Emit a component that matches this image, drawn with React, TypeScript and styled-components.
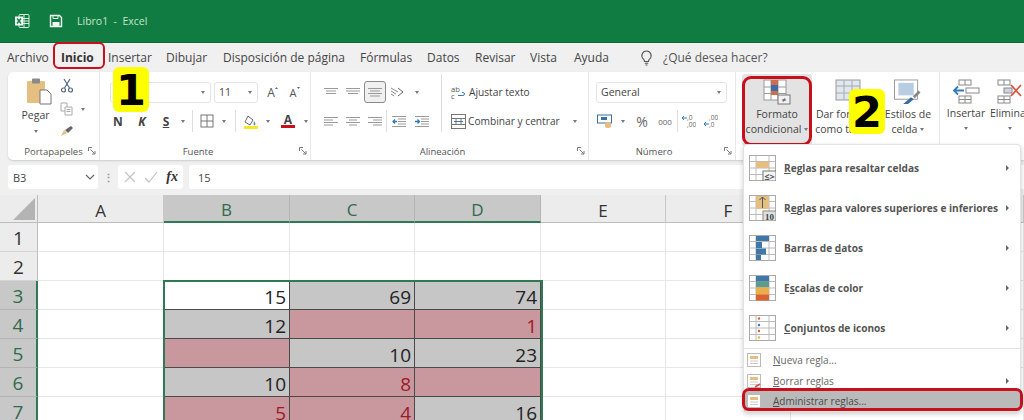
import styled, { createGlobalStyle } from "styled-components";

const GlobalStyle = createGlobalStyle`
    html, body { margin: 0; padding: 0; background: #f0f0f0; }
    body { font-family: "Open Sans", "Noto Sans", sans-serif; color: #444; overflow: hidden; }
    #root { width: 1024px; height: 420px; overflow: hidden; }
`;

const Page = styled.div`
    position: relative;
    width: 1024px;
    height: 420px;
    overflow: hidden;
    background: #f0f0f0;
`;

/* ---- title bar ---- */
const TitleBar = styled.div`
    height: 43px;
    box-sizing: border-box;
    background: #107c41;
    display: flex;
    align-items: center;
    padding: 0 0 0 14px;
    border-bottom: 1px solid #0c6a37;
`;

const TitleText = styled.span`
    margin-left: 14px;
    font-size: 10.5px;
    color: #c4e3cf;
    white-space: pre;
`;

/* ---- tabs ---- */
const TabRow = styled.div`
    height: 29px;
    display: flex;
    align-items: center;
    padding-left: 7px;
    font-size: 12px;
    color: #444;
    white-space: nowrap;
`;

const Tab = styled.span<{ $w: number }>`
    width: ${(p) => p.$w}px;
    flex: none;
`;

const ActiveTab = styled(Tab)`
    position: relative;
    font-weight: 700;
    color: #333;
    &::after {
        content: "";
        position: absolute;
        left: -8px;
        top: -7px;
        width: 48px;
        height: 23px;
        border: 2.5px solid #c8101c;
        border-radius: 6px;
    }
`;

const SearchHint = styled.span`
    margin-left: 10px;
    font-size: 12px;
    color: #555;
`;

/* ---- ribbon ---- */
const Ribbon = styled.div`
    height: 88px;
    margin-left: 8px;
    display: flex;
    background: #fff;
    border-radius: 5px 0 0 5px;
    box-shadow: 0 1px 2px rgba(0, 0, 0, 0.15);
    overflow: hidden;
`;

const Group = styled.div<{ $w: number; $last?: boolean }>`
    width: ${(p) => p.$w}px;
    flex: none;
    box-sizing: border-box;
    display: flex;
    flex-direction: column;
    padding: 2px 0;
    border-right: ${(p) => (p.$last ? "none" : "1px solid #e8e8e8")};
`;

const GroupBody = styled.div`
    height: 70px;
    flex: none;
    display: flex;
`;

const GroupFoot = styled.div<{ $shift?: number }>`
    height: 14px;
    flex: none;
    position: relative;
    display: flex;
    align-items: center;
    justify-content: center;
    box-sizing: border-box;
    padding-right: ${(p) => p.$shift ?? 0}px;
    font-size: 9.5px;
    color: #555;
    & > svg { position: absolute; right: 3px; top: 3px; }
`;

const Stack = styled.div<{ $w?: number; $pl?: number }>`
    display: flex;
    flex-direction: column;
    ${(p) => (p.$w ? `width: ${p.$w}px; flex: none;` : "")}
    padding-left: ${(p) => p.$pl ?? 0}px;
    box-sizing: border-box;
`;

const ToolRow = styled.div<{ $h?: number; $pl?: number; $pt?: number }>`
    height: ${(p) => p.$h ?? 24}px;
    display: flex;
    align-items: center;
    padding-left: ${(p) => p.$pl ?? 0}px;
    margin-top: ${(p) => p.$pt ?? 0}px;
`;

const Tool = styled.span<{ $w: number; $active?: boolean }>`
    width: ${(p) => p.$w}px;
    height: 22px;
    flex: none;
    display: flex;
    align-items: center;
    justify-content: center;
    font-size: 12px;
    color: #555;
    box-sizing: border-box;
    ${(p) => (p.$active ? "border: 1px solid #8a8a8a; border-radius: 3px; background: #f0f0f0;" : "")}
`;

const ToolText = styled.span<{ $w: number }>`
    width: ${(p) => p.$w}px;
    flex: none;
    font-size: 10.2px;
    color: #444;
    white-space: nowrap;
    margin-left: 2px;
`;

const TinyDigits = styled.span`
    font-size: 8px;
    color: #666;
`;

const PercentSign = styled.span`
    font-size: 14px;
    color: #666;
`;

const BoldLetter = styled.span<{ $italic?: boolean; $under?: boolean }>`
    font-size: 12px;
    font-weight: 700;
    color: #444;
    font-style: ${(p) => (p.$italic ? "italic" : "normal")};
    text-decoration: ${(p) => (p.$under ? "underline" : "none")};
`;

const RowSep = styled.span<{ $h?: number; $mx?: number }>`
    width: 1px;
    height: ${(p) => p.$h ?? 22}px;
    flex: none;
    background: #dedede;
    margin: 0 ${(p) => p.$mx ?? 0}px;
`;

const Caret = styled.span`
    width: 0;
    height: 0;
    display: inline-block;
    border-left: 2.5px solid transparent;
    border-right: 2.5px solid transparent;
    border-top: 3px solid #777;
`;

const ComboBox = styled.span<{ $w: number }>`
    width: ${(p) => p.$w}px;
    height: 21px;
    flex: none;
    box-sizing: border-box;
    margin-right: 3px;
    padding: 0 5px 0 4px;
    display: flex;
    align-items: center;
    justify-content: space-between;
    font-size: 10.5px;
    color: #444;
    border: 1px solid #e4e4e4;
    border-radius: 3px;
`;

const PasteButton = styled.div`
    width: 52px;
    flex: none;
    box-sizing: border-box;
    padding: 4px 0 0 3px;
    display: flex;
    flex-direction: column;
    align-items: center;
    font-size: 10.5px;
    color: #444;
    & > svg { margin: 0 0 3px 6px; }
    & > span:last-child { margin-top: 8px; }
`;

const SmallTools = styled.div`
    display: flex;
    flex-direction: column;
    align-items: flex-start;
    gap: 9px;
    padding-top: 4px;
`;

const CopyTool = styled.span`
    display: inline-flex;
    align-items: center;
    gap: 8px;
`;

const BigButton = styled.div<{ $w: number }>`
    position: relative;
    width: ${(p) => p.$w}px;
    flex: none;
    height: 70px;
    box-sizing: border-box;
    padding-top: 5px;
    display: flex;
    flex-direction: column;
    align-items: center;
    font-size: 10.5px;
    line-height: 15px;
    text-align: center;
    color: #444;
    white-space: nowrap;
    & > svg { margin-bottom: 2px; flex: none; }
    & > span:last-child:empty { margin-top: 6px; }
`;

const FormatButton = styled(BigButton)`
    background: #e3e3e3;
    border-radius: 3px;
    margin-left: 6px;
    height: 72px;
    &::after {
        content: "";
        position: absolute;
        left: 0;
        top: 2px;
        right: 0;
        bottom: 0;
        border: 3px solid #c8101c;
        border-radius: 9px;
    }
`;

const CapLabel = styled.span`
    display: inline-flex;
    align-items: center;
    gap: 3px;
`;

/* ---- formula bar ---- */
const FormulaRow = styled.div`
    height: 24px;
    margin-top: 5px;
    padding-left: 8px;
    display: flex;
    align-items: stretch;
    font-size: 11px;
    color: #444;
`;

const NameBox = styled.div`
    width: 90px;
    box-sizing: border-box;
    display: flex;
    align-items: center;
    justify-content: space-between;
    padding: 0 3px 0 5px;
    background: #fff;
    border-radius: 3px;
`;

const Dots = styled.div`
    width: 20px;
    display: flex;
    align-items: center;
    justify-content: center;
    color: #999;
    font-size: 11px;
    font-weight: 700;
`;

const FxBox = styled.div`
    width: 65px;
    box-sizing: border-box;
    display: flex;
    align-items: center;
    justify-content: space-between;
    padding: 0 5px 0 6px;
    background: #fff;
    border-radius: 3px;
`;

const FxLabel = styled.span`
    font-family: "Liberation Serif", serif;
    font-style: italic;
    font-weight: 700;
    font-size: 14px;
    color: #333;
`;

const FormulaInput = styled.div`
    flex: 1;
    margin-left: 6px;
    padding-left: 9px;
    display: flex;
    align-items: center;
    background: #fff;
    border-radius: 3px 0 0 3px;
`;

/* ---- sheet ---- */
const Sheet = styled.div`
    position: relative;
    margin-top: 6px;
    display: grid;
    grid-template-columns: 38px 126px 126px 125px 126px 125px 125px 1fr;
    grid-template-rows: 28px repeat(7, 29px);
    background: #fff;
`;

const Corner = styled.div`
    background: #ececec;
    border-bottom: 1px solid #bdbdbd;
    border-right: 1px solid #bdbdbd;
    box-sizing: border-box;
    position: relative;
    &::after {
        content: "";
        position: absolute;
        right: 2px;
        bottom: 2px;
        border-style: solid;
        border-width: 0 0 22px 22px;
        border-color: transparent transparent #b4b4b4 transparent;
    }
`;

const ColHead = styled.div<{ $sel?: boolean }>`
    box-sizing: border-box;
    display: flex;
    align-items: center;
    justify-content: center;
    padding-top: 3px;
    font-size: 17px;
    color: ${(p) => (p.$sel ? "#2f6b4c" : "#333")};
    background: ${(p) => (p.$sel ? "#c8c8c8" : "#ececec")};
    border-right: 1px solid ${(p) => (p.$sel ? "#b4b4b4" : "#c8c8c8")};
    border-bottom: ${(p) => (p.$sel ? "2px solid #2f7a54" : "1px solid #bdbdbd")};
`;

const RowHead = styled.div<{ $sel?: boolean }>`
    box-sizing: border-box;
    display: flex;
    align-items: center;
    justify-content: center;
    padding-top: 2px;
    font-size: 19px;
    color: ${(p) => (p.$sel ? "#2f6b4c" : "#333")};
    background: ${(p) => (p.$sel ? "#c8c8c8" : "#ececec")};
    border-bottom: 1px solid ${(p) => (p.$sel ? "#b4b4b4" : "#d4d4d4")};
    border-right: ${(p) => (p.$sel ? "2px solid #2f7a54" : "1px solid #bdbdbd")};
`;

const tones = {
    none: { bg: "#fff", fg: "#222", line: "#e6e6e6" },
    white: { bg: "#fff", fg: "#222", line: "#4a4a4a" },
    gray: { bg: "#c6c6c6", fg: "#222", line: "#4a4a4a" },
    pink: { bg: "#c9979e", fg: "#9c1a26", line: "#4a4a4a" },
};

const Cell = styled.div<{ $tone: keyof typeof tones }>`
    box-sizing: border-box;
    display: flex;
    align-items: center;
    justify-content: flex-end;
    padding: 3px 3px 0 0;
    font-size: 19px;
    background: ${(p) => tones[p.$tone].bg};
    color: ${(p) => tones[p.$tone].fg};
    border-right: 1px solid ${(p) => tones[p.$tone].line};
    border-bottom: 1px solid ${(p) => tones[p.$tone].line};
`;

const SelectionFrame = styled.div`
    position: absolute;
    left: 163px;
    top: 85px;
    width: 376px;
    height: 150px;
    border: 2px solid #2f7a54;
    pointer-events: none;
`;

/* ---- dropdown ---- */
const Menu = styled.div`
    position: absolute;
    left: 743px;
    top: 144px;
    width: 278px;
    height: 268px;
    box-sizing: border-box;
    padding-top: 3px;
    background: #fff;
    border: 1px solid #e2e2e2;
    border-radius: 4px;
    box-shadow: 0 2px 5px rgba(0, 0, 0, 0.2);
    z-index: 3;
`;

const BigItem = styled.div`
    height: 40px;
    display: flex;
    align-items: center;
    padding: 0 11px 0 5px;
    font-size: 10.1px;
    font-weight: 700;
    color: #555;
    white-space: nowrap;
    & > svg:first-child { margin-right: 8px; flex: none; }
`;

const SmallItem = styled.div`
    height: 21px;
    display: flex;
    align-items: center;
    padding: 0 11px 0 3px;
    font-size: 10px;
    color: #666;
    white-space: nowrap;
    & > svg:first-child { margin-right: 12px; flex: none; }
`;

const ManageItem = styled(SmallItem)`
    position: relative;
    height: 20px;
    background: #bababa;
    color: #4a4a4a;
    &::after {
        content: "";
        position: absolute;
        left: -2px;
        right: -3px;
        top: -3px;
        bottom: 0;
        border: 3px solid #c8101c;
        border-radius: 7px;
    }
`;

const MenuSep = styled.div`
    height: 1px;
    background: #e2e2e2;
`;

const Push = styled.span`
    flex: 1;
`;

const ArrowRight = styled.span`
    width: 0;
    height: 0;
    border-top: 3px solid transparent;
    border-bottom: 3px solid transparent;
    border-left: 3.5px solid #666;
`;

const Key = styled.span`
    text-decoration: underline;
`;

const Badge = styled.div<{ $x: number; $y: number }>`
    position: absolute;
    left: ${(p) => p.$x}px;
    top: ${(p) => p.$y}px;
    width: 36px;
    height: 45px;
    display: flex;
    align-items: center;
    justify-content: center;
    background: #ffff00;
    border-radius: 6px;
    font-family: "DejaVu Sans", sans-serif;
    font-weight: 700;
    font-size: 43px;
    color: #000;
    z-index: 4;
`;

/* ---- drawings ---- */
const ExcelLogo = () => (
    <svg width="16" height="16" viewBox="0 0 16 16" fill="none">
        <rect x="5" y="1.500" width="10" height="13" rx="1" stroke="#d8efe1" />
        <path d="M10 2v12M5 5.500h10M5 8h10M5 10.500h10" stroke="#d8efe1" />
        <rect x="1" y="3.500" width="8" height="9" fill="#f2faf5" />
        <path d="M3 5.500l4 5M7 5.500l-4 5" stroke="#107c41" strokeWidth="1.4" />
    </svg>
);

const SaveGlyph = styled.svg`
    margin-left: 19px;
`;

const SaveIcon = () => (
    <SaveGlyph width="14" height="14" viewBox="0 0 14 14" fill="none">
        <path d="M1.500 1.500h9l2 2v9h-11z" stroke="#eef8f1" strokeWidth="1.4" />
        <path d="M4 1.500v3h5v-3" stroke="#eef8f1" />
        <rect x="3.500" y="8" width="7" height="4.500" fill="#eef8f1" />
    </SaveGlyph>
);

const Bulb = () => (
    <svg width="13" height="16" viewBox="0 0 13 16" fill="none" stroke="#555" strokeWidth="1.1">
        <path d="M6.500 1a4.600 4.600 0 0 0-3 8.100c.7.7 1 1.400 1 2.400h4c0-1 .3-1.700 1-2.400a4.600 4.600 0 0 0-3-8.100z" />
        <path d="M4.800 13.200h3.400M5.500 15h2" />
    </svg>
);

const Launcher = () => (
    <svg width="8" height="8" viewBox="0 0 8 8" fill="none" stroke="#777">
        <path d="M.5 4V.5H4M2.500 2.500l4 4M7 4v3H4" />
    </svg>
);

const Clipboard = () => (
    <svg width="26" height="27" viewBox="0 0 26 27">
        <rect x="1" y="3" width="18" height="22" rx="1" fill="#e5bf82" />
        <rect x="6" y="0.500" width="8" height="5" rx="1" fill="#8a8a8a" />
        <path d="M14 12h7l4 4v10H14z" fill="#fff" stroke="#777" />
    </svg>
);

const Scissors = () => (
    <svg width="14" height="15" viewBox="0 0 14 15" fill="none" stroke="#55667e" strokeWidth="1.2">
        <circle cx="3.500" cy="12" r="2" />
        <circle cx="10.500" cy="12" r="2" />
        <path d="M4.500 10L10 1M9.500 10L4 1" />
    </svg>
);

const CopyIcon = () => (
    <svg width="13" height="14" viewBox="0 0 13 14" fill="#fff" stroke="#aaa">
        <path d="M1 1h6v8H1z" />
        <path d="M5 5h7v8H5z" />
        <path d="M6.500 7.500h4M6.500 9.500h4" />
    </svg>
);

const Brush = () => (
    <svg width="14" height="12" viewBox="0 0 14 12">
        <path d="M1 11l3-6 3 3z" fill="#e5bf82" />
        <path d="M5 5l6-4 2 2-5 5z" fill="#666" />
    </svg>
);

const GrowFont = ({ down }: { down?: boolean }) => (
    <svg width="14" height="14" viewBox="0 0 14 14">
        <text x="6" y="12" textAnchor="middle" fontSize={down ? 11 : 12} fontFamily="Open Sans" fill="#555">A</text>
        <path d={down ? "M10 2l1.500 2L13 2z" : "M10 4l1.500-2L13 4z"} fill="#666" />
    </svg>
);

const BorderIcon = () => (
    <svg width="14" height="14" viewBox="0 0 14 14" fill="none" stroke="#777">
        <rect x="1" y="1" width="12" height="12" />
        <path d="M7 1v12M1 7h12" />
    </svg>
);

const FillIcon = () => (
    <svg width="16" height="17" viewBox="0 0 16 17">
        <path d="M5 3l5 4-3 5-5-3z" fill="#fff" stroke="#666" />
        <path d="M11 8c1 2 2 3 1 4s-2 0-1-4z" fill="#5a7fa8" />
        <rect x="1" y="13" width="14" height="3" fill="#f6e727" />
    </svg>
);

const FontColor = () => (
    <svg width="16" height="16" viewBox="0 0 16 16">
        <text x="8" y="11" textAnchor="middle" fontSize="12" fontWeight="700" fontFamily="Open Sans" fill="#444">A</text>
        <rect x="1" y="12" width="14" height="3" fill="#c8101c" />
    </svg>
);

const Lines = ({ rows }: { rows: number[][] }) => (
    <svg width="14" height="12" viewBox="0 0 14 12" stroke="#999">
        {rows.map(([a, b], i) => (
            <path key={i} d={`M${a} ${2.5 + i * 2.5}H${b}`} />
        ))}
    </svg>
);

const WrapIcon = () => (
    <svg width="16" height="14" viewBox="0 0 16 14">
        <text x="0" y="6.500" fontSize="7.500" fontFamily="Open Sans" fill="#555">ab</text>
        <text x="0" y="13.500" fontSize="7.500" fontFamily="Open Sans" fill="#555">c</text>
        <path d="M7 10.500h5c2 0 2-3 0-3h-1" stroke="#3a78b8" fill="none" />
    </svg>
);

const MergeIcon = () => (
    <svg width="15" height="15" viewBox="0 0 15 15" fill="none" stroke="#777">
        <rect x="0.500" y="0.500" width="14" height="14" />
        <path d="M.5 4.500h14M.5 10.500h14M5 4.500v6M10 4.500v6" />
        <path d="M3 7.500h9" stroke="#3a78b8" />
    </svg>
);

const Indent = ({ flip }: { flip?: boolean }) => (
    <svg width="14" height="12" viewBox="0 0 14 12" stroke="#9a9a9a" fill="none">
        <path d="M0 1.500h14M6 4h8M6 6.500h8M6 9h8M0 11.500h14" />
        <path d={flip ? "M0 6.500h4M2.500 4.500l2 2-2 2" : "M5 6.500H1M3 4.500l-2 2 2 2"} stroke="#2f7bbd" strokeWidth="1.3" />
    </svg>
);

const Orientation = () => (
    <svg width="15" height="12" viewBox="0 0 15 12" fill="none" stroke="#888">
        <path d="M1 2l7 4M1 5l5 3M1 8l3 2" />
        <path d="M8 2l5 4-5 4" stroke="#666" />
    </svg>
);

const CurrencyIcon = () => (
    <svg width="16" height="15" viewBox="0 0 16 15">
        <rect x="0.500" y="1" width="14" height="8" fill="#fff" stroke="#3a6ea5" />
        <rect x="4" y="3" width="6" height="3" fill="#3a6ea5" />
        <rect x="8" y="8" width="6" height="6" rx="2" fill="#e5bf82" />
    </svg>
);

const DecimalIcon = ({ up }: { up?: boolean }) => (
    <svg width="14" height="14" viewBox="0 0 14 14">
        <text x="5" y="6" fontSize="6.500" fontFamily="Open Sans" fill="#666">{up ? ",0" : ",00"}</text>
        <text x="5" y="13" fontSize="6.500" fontFamily="Open Sans" fill="#666">{up ? ",00" : ",0"}</text>
        <path d={up ? "M5 4H0M2 2L0 4l2 2" : "M5 10H0M2 8l-2 2 2 2"} stroke="#2f7bbd" fill="none" />
    </svg>
);

const FormatIcon = () => (
    <svg width="28" height="26" viewBox="0 0 28 26" fill="none">
        <rect x="1" y="1" width="22" height="20" fill="#fff" stroke="#999" />
        <path d="M8 1v20M15 1v20M1 8h22M1 14.500h22" stroke="#999" />
        <rect x="8" y="1" width="7" height="5" fill="#cf6b4e" />
        <rect x="8" y="6" width="7" height="6" fill="#3a6ea5" />
        <rect x="8" y="12" width="7" height="4" fill="#cf6b4e" />
        <rect x="15" y="16" width="12" height="9" fill="#f2f2f2" stroke="#777" />
        <text x="21" y="24" fontSize="8" textAnchor="middle" fontFamily="Open Sans" fill="#444">≠</text>
    </svg>
);

const TableGlyph = styled.svg`
    margin-left: 6px;
`;

const TableIcon = () => (
    <TableGlyph width="28" height="26" viewBox="0 0 28 26" fill="none">
        <rect x="1" y="1" width="24" height="20" fill="#dfe7ef" stroke="#999" />
        <path d="M9 1v20M17 1v20M1 7h24M1 14h24" stroke="#aaa" />
        <path d="M14 24l6-6 4 2-4 5z" fill="#3a6ea5" />
    </TableGlyph>
);

const CellStyleIcon = () => (
    <svg width="30" height="26" viewBox="0 0 30 27" fill="none">
        <rect x="1" y="1" width="24" height="20" fill="#fff" stroke="#999" />
        <rect x="5" y="4" width="16" height="13" fill="#b9cde2" />
        <path d="M10 26l8-7 3 2-6 5z" fill="#3a6ea5" />
        <path d="M20 18l6-6 2 2-6 6z" fill="#888" />
    </svg>
);

const InsertIcon = () => (
    <svg width="28" height="25" viewBox="0 0 28 25" fill="none" stroke="#888">
        <rect x="7" y="1" width="12" height="5" />
        <rect x="7" y="17" width="12" height="7" />
        <path d="M13 1v5M13 17v7M7 20.500h12" />
        <rect x="14" y="9" width="13" height="5" />
        <path d="M12 11.500H2M6 7.500l-4 4 4 4" stroke="#2f7bbd" strokeWidth="1.8" />
    </svg>
);

const DeleteIcon = () => (
    <svg width="28" height="25" viewBox="0 0 28 25" fill="none" stroke="#888">
        <rect x="2" y="1" width="12" height="5" />
        <rect x="2" y="17" width="12" height="7" />
        <path d="M8 1v5M8 17v7M2 20.500h12" />
        <rect x="8" y="9" width="8" height="5" fill="#c9d7e6" />
        <path d="M15 6l10 11M25 6L15 17" stroke="#d9553f" strokeWidth="1.8" />
    </svg>
);

const GridBase = () => (
    <>
        <rect x="0.500" y="0.500" width="26" height="25" fill="#fff" stroke="#aaa" />
        <path d="M7 .5v25M20 .5v25M.5 6.500h26M.5 13h26M.5 19.500h26" stroke="#bbb" />
    </>
);

const MenuIcon = ({ kind }: { kind: string }) => (
    <svg width="27" height="26" viewBox="0 0 27 26" fill="none">
        <GridBase />
        {kind === "highlight" && (
            <>
                <rect x="7" y="6.500" width="13" height="6.500" fill="#e5bf82" />
                <rect x="14" y="16" width="13" height="10" fill="#f4f4f4" stroke="#777" />
                <text x="20.500" y="24.500" fontSize="9" textAnchor="middle" fontFamily="Open Sans" fill="#555">{"≤>"}</text>
            </>
        )}
        {kind === "top" && (
            <>
                <rect x="7" y="1" width="13" height="13" fill="#e5bf82" />
                <path d="M13.500 13V2M10.500 5l3-3 3 3" stroke="#555" />
                <rect x="14" y="16" width="13" height="10" fill="#e0e0e0" stroke="#888" />
                <text x="20.500" y="24.500" fontSize="9" textAnchor="middle" fontFamily="Liberation Serif" fill="#444">10</text>
            </>
        )}
        {kind === "bars" && (
            <>
                <rect x="7" y="1" width="13" height="5" fill="#3f77a6" />
                <rect x="7" y="7" width="6" height="6" fill="#3f77a6" />
                <rect x="7" y="13.500" width="10" height="6" fill="#3f77a6" />
                <rect x="7" y="20" width="5" height="5" fill="#3f77a6" />
            </>
        )}
        {kind === "scale" && (
            <>
                <rect x="7" y="1" width="13" height="5.500" fill="#3f77a6" />
                <rect x="7" y="6.500" width="13" height="6" fill="#5f9a8a" />
                <rect x="7" y="12.500" width="13" height="7" fill="#ecae4a" />
                <rect x="7" y="19.500" width="13" height="6" fill="#d9622f" />
            </>
        )}
        {kind === "sets" && (
            <>
                <circle cx="10" cy="3.500" r="1.200" fill="#d9622f" />
                <circle cx="10" cy="10" r="1.200" fill="#3f77a6" />
                <circle cx="10" cy="16" r="1.200" fill="#d9622f" />
                <circle cx="10" cy="22.500" r="1.200" fill="#ecae4a" />
            </>
        )}
    </svg>
);

const RuleIcon = ({ kind }: { kind?: "clear" }) => (
    <svg width="14" height="14" viewBox="0 0 14 14" fill="none">
        <rect x="0.500" y="0.500" width="13" height="13" fill="#fff" stroke="#bbb" />
        <rect x="3" y="3" width="8" height="3" fill="#e5bf82" />
        <path d="M3 8h8M3 10.500h8" stroke="#ccc" />
        {kind === "clear" && <path d="M8 13l5-3" stroke="#d9553f" strokeWidth="2" />}
    </svg>
);

const Chevron = () => (
    <svg width="10" height="6" viewBox="0 0 10 6" fill="none" stroke="#666" strokeWidth="1.2">
        <path d="M1 1l4 4 4-4" />
    </svg>
);

const CrossIcon = () => (
    <svg width="12" height="12" viewBox="0 0 12 12" stroke="#c4c4c4" strokeWidth="1.2">
        <path d="M1 1l10 10M11 1L1 11" />
    </svg>
);

const CheckIcon = () => (
    <svg width="14" height="12" viewBox="0 0 14 12" fill="none" stroke="#c4c4c4" strokeWidth="1.2">
        <path d="M1 7l4 4 8-10" />
    </svg>
);

type Tone = keyof typeof tones;

const rows: { n: number; b?: string; c?: string; d?: string; tones: Tone[] }[] = [
    { n: 1, tones: ["none", "none", "none"] },
    { n: 2, tones: ["none", "none", "none"] },
    { n: 3, b: "15", c: "69", d: "74", tones: ["white", "gray", "gray"] },
    { n: 4, b: "12", d: "1", tones: ["gray", "pink", "pink"] },
    { n: 5, c: "10", d: "23", tones: ["pink", "gray", "gray"] },
    { n: 6, b: "10", c: "8", tones: ["gray", "pink", "pink"] },
    { n: 7, b: "5", c: "4", d: "16", tones: ["pink", "pink", "gray"] },
];

function Row({ n, b, c, d, tones: t }: { n: number; b?: string; c?: string; d?: string; tones: Tone[] }) {
    return (
        <>
            <RowHead $sel={n > 2}>{n}</RowHead>
            <Cell $tone="none" />
            <Cell $tone={t[0]}>{b}</Cell>
            <Cell $tone={t[1]}>{c}</Cell>
            <Cell $tone={t[2]}>{d}</Cell>
            <Cell $tone="none" />
            <Cell $tone="none" />
            <Cell $tone="none" />
        </>
    );
}

export default function App() {
    return (
        <Page>
            <GlobalStyle />
            <TitleBar>
                <ExcelLogo />
                <SaveIcon />
                <TitleText>Libro1  -  Excel</TitleText>
            </TitleBar>

            <TabRow>
                <Tab $w={54}>Archivo</Tab>
                <ActiveTab $w={47}>Inicio</ActiveTab>
                <Tab $w={58}>Insertar</Tab>
                <Tab $w={57}>Dibujar</Tab>
                <Tab $w={137}>Disposición de página</Tab>
                <Tab $w={67}>Fórmulas</Tab>
                <Tab $w={48}>Datos</Tab>
                <Tab $w={55}>Revisar</Tab>
                <Tab $w={44}>Vista</Tab>
                <Tab $w={66}>Ayuda</Tab>
                <Bulb />
                <SearchHint>¿Qué desea hacer?</SearchHint>
            </TabRow>

            <Ribbon>
                <Group $w={92}>
                    <GroupBody>
                        <PasteButton>
                            <Clipboard />
                            Pegar
                            <Caret />
                        </PasteButton>
                        <SmallTools>
                            <Scissors />
                            <CopyTool>
                                <CopyIcon />
                                <Caret />
                            </CopyTool>
                            <Brush />
                        </SmallTools>
                    </GroupBody>
                    <GroupFoot>
                        <span>Portapapeles</span>
                        <Launcher />
                    </GroupFoot>
                </Group>

                <Group $w={211}>
                    <GroupBody>
                        <Stack>
                            <ToolRow $pl={10} $pt={6}>
                                <ComboBox $w={101}>
                                    <span>C</span>
                                    <Caret />
                                </ComboBox>
                                <ComboBox $w={44}>
                                    <span>11</span>
                                    <Caret />
                                </ComboBox>
                                <Tool $w={21}><GrowFont /></Tool>
                                <Tool $w={23}><GrowFont down /></Tool>
                            </ToolRow>
                            <ToolRow $pl={6} $pt={5}>
                                <Tool $w={24}><BoldLetter>N</BoldLetter></Tool>
                                <Tool $w={24}><BoldLetter $italic>K</BoldLetter></Tool>
                                <Tool $w={24}><BoldLetter $under>S</BoldLetter></Tool>
                                <Tool $w={10}><Caret /></Tool>
                                <RowSep $mx={4} />
                                <Tool $w={20}><BorderIcon /></Tool>
                                <Tool $w={14}><Caret /></Tool>
                                <RowSep $mx={4} />
                                <Tool $w={22}><FillIcon /></Tool>
                                <Tool $w={12}><Caret /></Tool>
                                <Tool $w={28}><FontColor /></Tool>
                                <Tool $w={8}><Caret /></Tool>
                            </ToolRow>
                        </Stack>
                    </GroupBody>
                    <GroupFoot $shift={14}>
                        <span>Fuente</span>
                        <Launcher />
                    </GroupFoot>
                </Group>

                <Group $w={278}>
                    <GroupBody>
                        <Stack $w={130} $pl={9}>
                            <ToolRow $pt={6}>
                                <Tool $w={22}><Lines rows={[[0, 14], [2, 12], [2, 12]]} /></Tool>
                                <Tool $w={22}><Lines rows={[[0, 14], [0, 14], [2, 12]]} /></Tool>
                                <Tool $w={22} $active><Lines rows={[[0, 14], [2, 12], [0, 14], [2, 12]]} /></Tool>
                                <Tool $w={23}><Orientation /></Tool>
                                <Tool $w={16}><Caret /></Tool>
                            </ToolRow>
                            <ToolRow $pt={5}>
                                <Tool $w={22}><Lines rows={[[0, 14], [0, 9], [0, 14], [0, 9]]} /></Tool>
                                <Tool $w={22}><Lines rows={[[0, 14], [3, 11], [0, 14], [3, 11]]} /></Tool>
                                <Tool $w={22}><Lines rows={[[0, 14], [5, 14], [0, 14], [5, 14]]} /></Tool>
                                <RowSep />
                                <Tool $w={23}><Indent /></Tool>
                                <Tool $w={23}><Indent flip /></Tool>
                            </ToolRow>
                        </Stack>
                        <RowSep $h={58} />
                        <Stack $pl={9}>
                            <ToolRow $pt={6}>
                                <WrapIcon />
                                <ToolText $w={100}>Ajustar texto</ToolText>
                            </ToolRow>
                            <ToolRow $pt={5}>
                                <MergeIcon />
                                <ToolText $w={105}>Combinar y centrar</ToolText>
                                <Caret />
                            </ToolRow>
                        </Stack>
                    </GroupBody>
                    <GroupFoot $shift={14}>
                        <span>Alineación</span>
                        <Launcher />
                    </GroupFoot>
                </Group>

                <Group $w={147}>
                    <GroupBody>
                        <Stack $pl={7}>
                            <ToolRow $pt={6}>
                                <ComboBox $w={131}>
                                    <span>General</span>
                                    <Caret />
                                </ComboBox>
                            </ToolRow>
                            <ToolRow $pt={5}>
                                <Tool $w={18}><CurrencyIcon /></Tool>
                                <Tool $w={17}><Caret /></Tool>
                                <Tool $w={22}><PercentSign>%</PercentSign></Tool>
                                <Tool $w={24}><TinyDigits>000</TinyDigits></Tool>
                                <RowSep />
                                <Tool $w={22}><DecimalIcon up /></Tool>
                                <Tool $w={22}><DecimalIcon /></Tool>
                            </ToolRow>
                        </Stack>
                    </GroupBody>
                    <GroupFoot $shift={16}>
                        <span>Número</span>
                        <Launcher />
                    </GroupFoot>
                </Group>

                <Group $w={204}>
                    <GroupBody>
                        <FormatButton $w={70}>
                            <FormatIcon />
                            Formato
                            <CapLabel>condicional <Caret /></CapLabel>
                        </FormatButton>
                        <BigButton $w={68}>
                            <TableIcon />
                            Dar formato
                            <CapLabel>como tabla <Caret /></CapLabel>
                        </BigButton>
                        <BigButton $w={56}>
                            <CellStyleIcon />
                            Estilos de
                            <CapLabel>celda <Caret /></CapLabel>
                        </BigButton>
                    </GroupBody>
                </Group>

                <Group $w={90} $last>
                    <GroupBody>
                        <BigButton $w={52}>
                            <InsertIcon />
                            Insertar
                            <Caret />
                        </BigButton>
                        <BigButton $w={36}>
                            <DeleteIcon />
                            Eliminar
                            <Caret />
                        </BigButton>
                    </GroupBody>
                </Group>
            </Ribbon>

            <FormulaRow>
                <NameBox>
                    B3
                    <Chevron />
                </NameBox>
                <Dots>⋮</Dots>
                <FxBox>
                    <CrossIcon />
                    <CheckIcon />
                    <FxLabel>fx</FxLabel>
                </FxBox>
                <FormulaInput>15</FormulaInput>
            </FormulaRow>

            <Sheet>
                <Corner />
                <ColHead>A</ColHead>
                <ColHead $sel>B</ColHead>
                <ColHead $sel>C</ColHead>
                <ColHead $sel>D</ColHead>
                <ColHead>E</ColHead>
                <ColHead>F</ColHead>
                <ColHead />
                {rows.map((r) => (
                    <Row key={r.n} {...r} />
                ))}
                <SelectionFrame />
            </Sheet>

            <Menu>
                <BigItem>
                    <MenuIcon kind="highlight" />
                    <span><Key>R</Key>eglas para resaltar celdas</span>
                    <Push />
                    <ArrowRight />
                </BigItem>
                <BigItem>
                    <MenuIcon kind="top" />
                    <span>R<Key>e</Key>glas para valores superiores e inferiores</span>
                    <Push />
                    <ArrowRight />
                </BigItem>
                <BigItem>
                    <MenuIcon kind="bars" />
                    <span>Barras de <Key>d</Key>atos</span>
                    <Push />
                    <ArrowRight />
                </BigItem>
                <BigItem>
                    <MenuIcon kind="scale" />
                    <span>E<Key>s</Key>calas de color</span>
                    <Push />
                    <ArrowRight />
                </BigItem>
                <BigItem>
                    <MenuIcon kind="sets" />
                    <span><Key>C</Key>onjuntos de iconos</span>
                    <Push />
                    <ArrowRight />
                </BigItem>
                <MenuSep />
                <SmallItem>
                    <RuleIcon />
                    <span><Key>N</Key>ueva regla...</span>
                </SmallItem>
                <SmallItem>
                    <RuleIcon kind="clear" />
                    <span><Key>B</Key>orrar reglas</span>
                    <Push />
                    <ArrowRight />
                </SmallItem>
                <ManageItem>
                    <RuleIcon />
                    <span><Key>A</Key>dministrar reglas...</span>
                </ManageItem>
            </Menu>

            <Badge $x={113} $y={67}>1</Badge>
            <Badge $x={849} $y={89}>2</Badge>
        </Page>
    );
}
